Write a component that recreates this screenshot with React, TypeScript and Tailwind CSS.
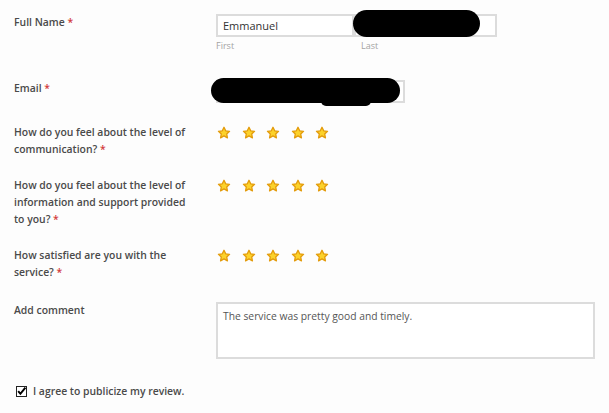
import React from 'react';

const Star = () => (
  <svg width="14" height="14" viewBox="0 0 24 24" className="shrink-0">
    <path
      d="M12 2.2l2.9 6.1 6.6.8-4.9 4.6 1.3 6.6L12 17l-5.9 3.3 1.3-6.6-4.9-4.6 6.6-.8z"
      fill="#fcd22a"
      stroke="#e39b0b"
      strokeWidth="2.2"
      strokeLinejoin="round"
    />
  </svg>
);

const Stars = () => (
  <div className="flex items-center gap-[10.5px] h-[17px] pl-[1px]">
    <Star />
    <Star />
    <Star />
    <Star />
    <Star />
  </div>
);

const Req = () => <span className="text-[#d23a3a]"> *</span>;

const Label = ({ children }: { children: React.ReactNode }) => (
  <div className="w-[216px] shrink-0 pl-[14px] pr-[22px] text-[10.4px] leading-[17px] font-semibold text-[#4a4a4a]">
    {children}
  </div>
);

const App = () => {
  return (
    <div
      className="w-[609px] h-[413px] bg-[#fdfdfd] overflow-hidden pt-[14px]"
      style={{ fontFamily: '"Open Sans", "Noto Sans", sans-serif' }}
    >
      {/* name */}
      <div className="flex">
        <Label>
          Full Name<Req />
        </Label>
        <div className="relative">
          <div className="flex">
            <div className="w-[138px]">
              <div className="h-[23px] border-2 border-[#dcdcdc] bg-white px-[5px] text-[11px] leading-[19px] text-[#333]">
                Emmanuel
              </div>
              <div className="mt-[3px] text-[9px] leading-[12px] text-[#a3a3a3]">First</div>
            </div>
            <div className="w-[143px]">
              <div className="h-[23px] border-2 border-[#dcdcdc] bg-white" />
              <div className="mt-[3px] pl-[7px] text-[9px] leading-[12px] text-[#a3a3a3]">Last</div>
            </div>
          </div>
          <div className="absolute left-[137px] top-[-4px] w-[127px] h-[27px] rounded-full bg-black" />
        </div>
      </div>

      {/* email */}
      <div className="flex mt-[28px]">
        <Label>
          Email<Req />
        </Label>
        <div className="relative">
          <div className="w-[189px] h-[23px] border-2 border-[#dcdcdc] bg-white" />
          <div className="absolute left-[-5px] top-[-2px] w-[189px] h-[25px] rounded-full bg-black" />
          <div className="absolute left-[105px] top-[16px] w-[50px] h-[10px] rounded-full bg-black" />
        </div>
      </div>

      {/* ratings */}
      <div className="flex mt-[21px]">
        <Label>
          How do you feel about the level of communication?<Req />
        </Label>
        <Stars />
      </div>

      <div className="flex mt-[19px]">
        <Label>
          How do you feel about the level of information and support provided to you?<Req />
        </Label>
        <Stars />
      </div>

      <div className="flex mt-[19px]">
        <Label>
          How satisfied are you with the service?<Req />
        </Label>
        <Stars />
      </div>

      {/* comment */}
      <div className="flex mt-[21px]">
        <Label>Add comment</Label>
        <div className="w-[379px] h-[57px] border-2 border-[#dcdcdc] bg-white px-[5px] pt-[5px] text-[10.3px] leading-[15px] text-[#555]">
          The service was pretty good and timely.
        </div>
      </div>

      {/* agree */}
      <div className="flex items-center mt-[24px] pl-[16px] h-[17px]">
        <svg width="11" height="11" viewBox="0 0 11 11" className="shrink-0">
          <rect x="0.5" y="0.5" width="10" height="10" fill="#fff" stroke="#222" />
          <path d="M2.2 5.2l2.2 2.6L9.4 1.6" fill="none" stroke="#000" strokeWidth="2" />
        </svg>
        <span className="ml-[6px] text-[10.4px] font-semibold text-[#4a4a4a]">
          I agree to publicize my review.
        </span>
      </div>
    </div>
  );
};

export default App;
